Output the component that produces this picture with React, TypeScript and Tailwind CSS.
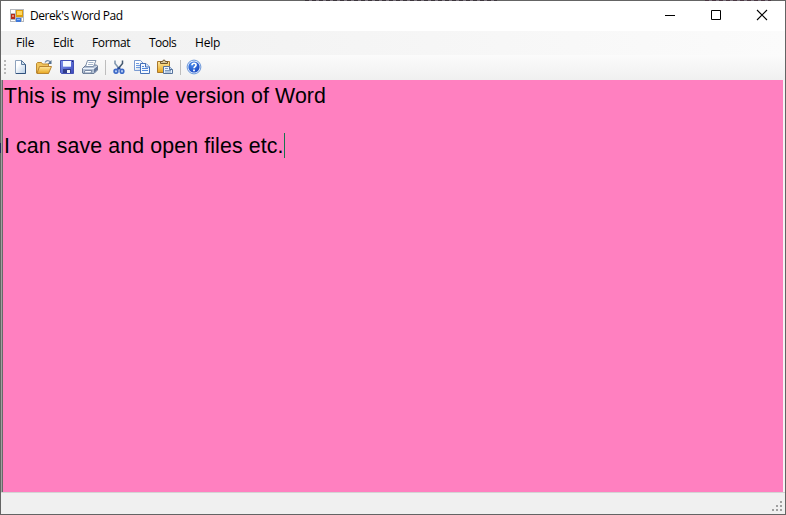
import type { ReactNode } from "react";

const Icon = ({ children }: { children: ReactNode }) => (
  <svg width="16" height="16" viewBox="0 0 16 16" className="block shrink-0">
    {children}
  </svg>
);

const Gradients = () => (
  <svg width="0" height="0" className="absolute">
    <defs>
      <linearGradient id="paper" x1="0" y1="0" x2="1" y2="1">
        <stop offset="0.3" stopColor="#ffffff" />
        <stop offset="1" stopColor="#b4cbe4" />
      </linearGradient>
      <linearGradient id="gold" x1="0" y1="0" x2="0" y2="1">
        <stop offset="0" stopColor="#ffe9a0" />
        <stop offset="1" stopColor="#e8a51c" />
      </linearGradient>
      <linearGradient id="disk" x1="0" y1="0" x2="1" y2="1">
        <stop offset="0" stopColor="#8095ee" />
        <stop offset="1" stopColor="#3a48bc" />
      </linearGradient>
      <radialGradient id="help" cx="0.35" cy="0.3" r="0.8">
        <stop offset="0" stopColor="#4a8cec" />
        <stop offset="1" stopColor="#1643bd" />
      </radialGradient>
    </defs>
  </svg>
);

const AppIcon = () => (
  <svg width="14" height="13" viewBox="0 0 14 13" className="block shrink-0">
    <path d="M0 0h14v13H0z" fill="#b4b8be" />
    <path d="M1 1h4v3H1zM1 11h4v1H1zM12 9h1v3h-1z" fill="#fff" />
    <path d="M1 5h4v5H1z" fill="#b62b19" />
    <path d="M2 6h2v2H2z" fill="#e98873" />
    <path d="M6 1h7v7H6z" fill="#dd9d0c" />
    <path d="M7 2h5v4H7z" fill="#ffd75e" />
    <path d="M6 9h5v4H6z" fill="#3f79dc" />
    <path d="M7 10h3v1H7z" fill="#8fb9fa" />
  </svg>
);

const NewIcon = () => (
  <Icon>
    <path d="M3.500 1.500h6l4 4v9h-10z" fill="url(#paper)" stroke="#8ea2bc" />
    <path d="M13.500 5v9.500H4" fill="none" stroke="#30517c" />
    <path d="M9.500 1.500v4h4z" fill="#d5e2f0" stroke="#5b7a9e" />
  </Icon>
);

const OpenIcon = () => (
  <Icon>
    <path d="M.5 14V4.500l1-1h4l1 1.500h6v9z" fill="#f0c45c" stroke="#bd8a33" />
    <path d="M1 14.500 3.500 7.500h12l-3 7z" fill="url(#gold)" stroke="#b98431" />
    <path d="M9 3.500c1.500-2.500 3.500-2.500 5.500-.5" fill="none" stroke="#7189a8" strokeWidth="1.200" />
    <path d="M15.500 1v4h-4z" fill="#55708f" />
  </Icon>
);

const SaveIcon = () => (
  <Icon>
    <path d="M1.500 1.500h13v13h-12l-1-1z" fill="url(#disk)" stroke="#444fb4" />
    <path d="M4 2h8v6H4z" fill="#f6f9ff" />
    <path d="M4 7h8v1H4z" fill="#c1cdf2" />
    <path d="M4 10h8v4H4z" fill="#303c8a" />
    <path d="M8 11h3v3H8z" fill="#f0f3fa" />
    <path d="M13 2h1v1h-1z" fill="#172568" />
  </Icon>
);

const PrintIcon = () => (
  <Icon>
    <path d="M.5 9.500 4 6h10.500l1 1v4l-3.500 3.500H1l-.5-.5z" fill="#b5c2d5" stroke="#6a7b97" />
    <path d="M5.500 1.500h8.500l-2.500 6H3.500z" fill="#fff" stroke="#7f90ab" />
    <path d="M6.500 3.500h5M6 5.500h5" stroke="#a3b4cb" />
    <path d="M1 9.500h11l3-2.500" fill="none" stroke="#edf3fc" />
    <path d="M12 14v-4l3-2.500v3.500z" fill="#64779a" />
    <path d="M3 11.500h7l-1 2.500H2z" fill="#f7fbff" stroke="#7989a4" />
  </Icon>
);

const CutIcon = () => (
  <Icon>
    <path d="M4 1.500v3l4.500 5.500" fill="none" stroke="#8298b0" strokeWidth="1.600" />
    <path d="M11.500 1.500v3L7 10" fill="none" stroke="#43586f" strokeWidth="1.500" />
    <path d="M6.300 9.500h3.200" stroke="#23469c" strokeWidth="2" />
    <ellipse cx="5" cy="12.300" rx="1.900" ry="1.900" fill="#b9cff5" stroke="#3c68c6" strokeWidth="1.600" />
    <ellipse cx="11" cy="12.200" rx="1.800" ry="2" fill="#b9cff5" stroke="#3c68c6" strokeWidth="1.600" />
  </Icon>
);

const CopyIcon = () => (
  <Icon>
    <path d="M.5 1.500h6l3 3v7h-9z" fill="url(#paper)" stroke="#7b9bd2" />
    <path d="M2 4.500h3M2 6.500h5M2 8.500h5" stroke="#6f9ae0" />
    <path d="M6.500 4.500h5.500l3.500 3.500v6.500h-9z" fill="#f3f8ff" stroke="#4670b8" />
    <path d="M11.500 4.500v3.500h4" fill="#d7e7ff" stroke="#4670b8" />
    <path d="M8 7.500h2M8 9.500h6M8 11.500h6" stroke="#5387dc" />
  </Icon>
);

const PasteIcon = () => (
  <Icon>
    <path d="M.5 2.500h12v11H.5z" fill="url(#gold)" stroke="#a9772b" />
    <path d="M3.500 4.500v-2h2l1-1.500h1l1 1.500h2v2z" fill="#d8c79a" stroke="#725629" />
    <path d="M6.500 7.500h6l3 3v4h-9z" fill="#e9f2ff" stroke="#57739c" />
    <path d="M12.500 7.500v3h3" fill="#bfd4ef" stroke="#57739c" />
    <path d="M8 9.500h3M8 11.500h6M8 13h6" stroke="#819cbe" />
  </Icon>
);

const HelpIcon = () => (
  <Icon>
    <circle cx="8" cy="8" r="6.900" fill="#e2edfd" stroke="#5f8dd6" strokeWidth="0.900" />
    <circle cx="8" cy="8" r="5.600" fill="url(#help)" />
    <path d="M6 6.300C6 3.500 10.300 3.600 10 6.200 9.900 7.500 8 7.700 8 9.200" fill="none" stroke="#fff" strokeWidth="1.700" />
    <path d="M7.100 10.500h1.800v1.700H7.100z" fill="#fff" />
  </Icon>
);

const Separator = () => <span className="h-[15px] w-px shrink-0 bg-[#bdbdbd]" />;

const TitleBar = () => (
  <header className="flex h-[30px] shrink-0 items-center bg-white pl-[9px]">
    <div className="pb-[2px]">
      <AppIcon />
    </div>
    <h1 className="ml-[6px] text-[12px] leading-[16px] tracking-[-0.44px] text-black">Derek's Word Pad</h1>
    <div className="ml-auto flex h-full items-center pb-[2px]">
      {["Minimize", "Maximize", "Close"].map((name) => (
        <button key={name} aria-label={name} className="flex w-[46px] items-center justify-center">
          <svg width="12" height="12" viewBox="0 0 12 12" className="block" fill="none" stroke="#000">
            {name === "Minimize" && <path d="M1 6.500h10" />}
            {name === "Maximize" && <path d="M1.500 1.500h9v9h-9z" />}
            {name === "Close" && <path d="m1 1 10 10M11 1 1 11" strokeWidth="1.100" />}
          </svg>
        </button>
      ))}
    </div>
  </header>
);

const MenuBar = () => (
  <nav className="flex h-[24px] shrink-0 items-center bg-gradient-to-r from-[#f0f0f0] to-[#fbfbfb] text-[12px] leading-[16px] tracking-[-0.2px] text-black">
    <span className="ml-[15px] w-[37px]">File</span>
    <span className="w-[39px]">Edit</span>
    <span className="w-[57px] tracking-[-0.35px]">Format</span>
    <span className="w-[46px] tracking-[-0.5px]">Tools</span>
    <span>Help</span>
  </nav>
);

const ToolBar = () => (
  <div className="flex h-[25px] shrink-0 items-center bg-gradient-to-b from-[#fbfbfb] to-[#f0f0f0] pb-[1px]">
    <div className="ml-[3px] flex w-[8px] flex-col gap-[2px]">
      {[0, 1, 2, 3].map((n) => (
        <span key={n} className="h-[2px] w-[2px] bg-[#b8b8b8]" />
      ))}
    </div>
    <NewIcon />
    <div className="ml-[8px] flex items-center gap-[7px]">
      <OpenIcon />
      <SaveIcon />
      <PrintIcon />
    </div>
    <div className="ml-[7px] flex items-center">
      <Separator />
      <div className="ml-[5px] mr-[7px] flex gap-[7px]">
        <CutIcon />
        <CopyIcon />
        <PasteIcon />
      </div>
      <Separator />
      <div className="ml-[5px]">
        <HelpIcon />
      </div>
    </div>
  </div>
);

const Editor = () => (
  <main className="flex min-h-0 flex-1 bg-[#f4f4f4] pr-[2px]">
    <div className="w-px bg-[#a0a0a0]" />
    <div className="flex-1 border-l border-[#696969] bg-[#ff80c0] font-['Liberation_Sans',Arial,sans-serif] text-[21.330px] leading-[25px] tracking-[0.11px] text-black">
      <p className="pl-px pt-[4px]">This is my simple version of Word</p>
      <p className="-mt-px flex pl-px pt-[25px]">
        <span className="relative top-px">I can save and open files etc.</span>
        <span className="h-[25px] w-px bg-[#18754e]" />
      </p>
    </div>
  </main>
);

const StatusBar = () => (
  <footer className="flex h-[22px] shrink-0 items-end justify-end border-t border-[#d4d4d4] bg-[#f0f0f0] pb-[3px] pr-[3px]">
    <svg width="11" height="11" viewBox="0 0 11 11" fill="#a0a0a0">
      <path d="M9 1h2v2H9zM5 5h2v2H5zM9 5h2v2H9zM1 9h2v2H1zM5 9h2v2H5zM9 9h2v2H9z" />
    </svg>
  </footer>
);

/* Bits of the window behind that show through the translucent frame. */
const FrameShadows = () => (
  <>
    <span className="absolute left-[305px] top-0 h-px w-[192px] bg-[repeating-linear-gradient(90deg,#3c363c_0_4px,#777079_4px_7px)]" />
    <span className="absolute left-[705px] top-0 h-px w-[66px] bg-[repeating-linear-gradient(90deg,#4a3843_0_4px,#777079_4px_7px)]" />
    <span className="absolute left-0 top-[143px] h-[10px] w-px bg-[#26265e]" />
  </>
);

export default function App() {
  return (
    <div className="relative h-[515px] w-[786px] overflow-hidden">
      <div className="flex h-full flex-col border border-[#646464] bg-[#f0f0f0] font-['Open_Sans','Noto_Sans',sans-serif]">
        <Gradients />
        <TitleBar />
        <MenuBar />
        <ToolBar />
        <Editor />
        <StatusBar />
      </div>
      <FrameShadows />
    </div>
  );
}
